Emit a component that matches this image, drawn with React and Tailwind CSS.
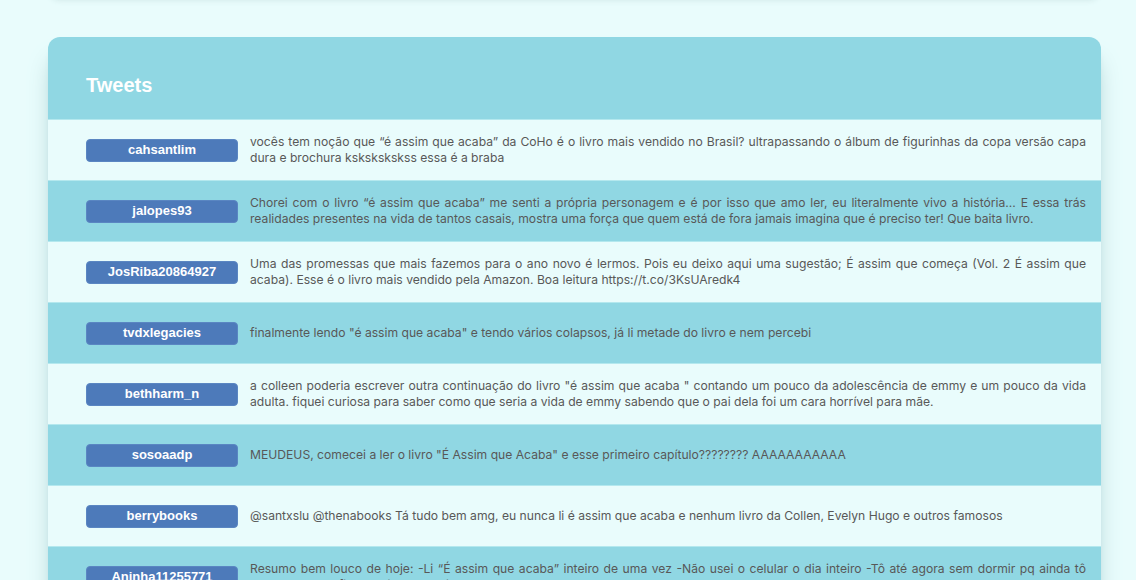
const tweets = [
  {
    user: "cahsantlim",
    text: "vocês tem noção que “é assim que acaba” da CoHo é o livro mais vendido no Brasil? ultrapassando o álbum de figurinhas da copa versão capa dura e brochura kskskskskss essa é a braba",
  },
  {
    user: "jalopes93",
    text: "Chorei com o livro “é assim que acaba” me senti a própria personagem e é por isso que amo ler, eu literalmente vivo a história… E essa trás realidades presentes na vida de tantos casais, mostra uma força que quem está de fora jamais imagina que é preciso ter! Que baita livro.",
  },
  {
    user: "JosRiba20864927",
    text: "Uma das promessas que mais fazemos para o ano novo é lermos. Pois eu deixo aqui uma sugestão; É assim que começa (Vol. 2 É assim que acaba). Esse é o livro mais vendido pela Amazon. Boa leitura https://t.co/3KsUAredk4",
  },
  {
    user: "tvdxlegacies",
    text: "finalmente lendo \"é assim que acaba\" e tendo vários colapsos, já li metade do livro e nem percebi",
  },
  {
    user: "bethharm_n",
    text: "a colleen poderia escrever outra continuação do livro \"é assim que acaba \" contando um pouco da adolescência de emmy e um pouco da vida adulta. fiquei curiosa para saber como que seria a vida de emmy sabendo que o pai dela foi um cara horrível para mãe.",
  },
  {
    user: "sosoaadp",
    text: "MEUDEUS, comecei a ler o livro \"É Assim que Acaba\" e esse primeiro capítulo???????? AAAAAAAAAAA",
  },
  {
    user: "berrybooks",
    text: "@santxslu @thenabooks Tá tudo bem amg, eu nunca li é assim que acaba e nenhum livro da Collen, Evelyn Hugo e outros famosos",
  },
  {
    user: "Aninha11255771",
    text: "Resumo bem louco de hoje: -Li “É assim que acaba” inteiro de uma vez -Não usei o celular o dia inteiro -Tô até agora sem dormir pq ainda tô processando o final do livro 15/01 às 04h",
  },
];

function TweetRow({ user, text, dark }) {
  return (
    <div
      className={`flex h-[61px] items-center border-t border-[#b4e8ee] pl-[38px] pr-[15px] ${
        dark ? "bg-[#90d7e3]" : "bg-[#e9fcfc]"
      }`}
    >
      <div className="flex h-[23px] w-[152px] shrink-0 items-center justify-center rounded-[4px] border border-[#5a86c2] bg-[#4d7aba] font-['Liberation_Sans',Arial,sans-serif] text-[13px] font-bold text-white">
        {user}
      </div>
      <p className="ml-3 text-justify font-['Inter',sans-serif] text-[12.15px] leading-4 text-[#585858]">
        {text}
      </p>
    </div>
  );
}

export default function App() {
  return (
    <div className="min-h-screen overflow-hidden bg-[#e9fcfc] pl-[48px] pr-[35px]">
      <div className="-mt-[203px] h-[200px] w-full rounded-xl bg-[#e9fcfc] shadow-md shadow-[#cfe6e6]"></div>
      <div className="mt-[40px] overflow-hidden rounded-t-xl shadow-xl shadow-[#a9cfd0]">
        <div className="bg-[#90d7e3] pl-[38px] pt-[34px] pb-[20px]">
          <h2 className="font-['Liberation_Sans',Arial,sans-serif] text-[20px] font-bold leading-7 text-white">
            Tweets
          </h2>
        </div>
        {tweets.map((t, i) => (
          <TweetRow key={t.user} user={t.user} text={t.text} dark={i % 2 === 1} />
        ))}
      </div>
    </div>
  );
}
